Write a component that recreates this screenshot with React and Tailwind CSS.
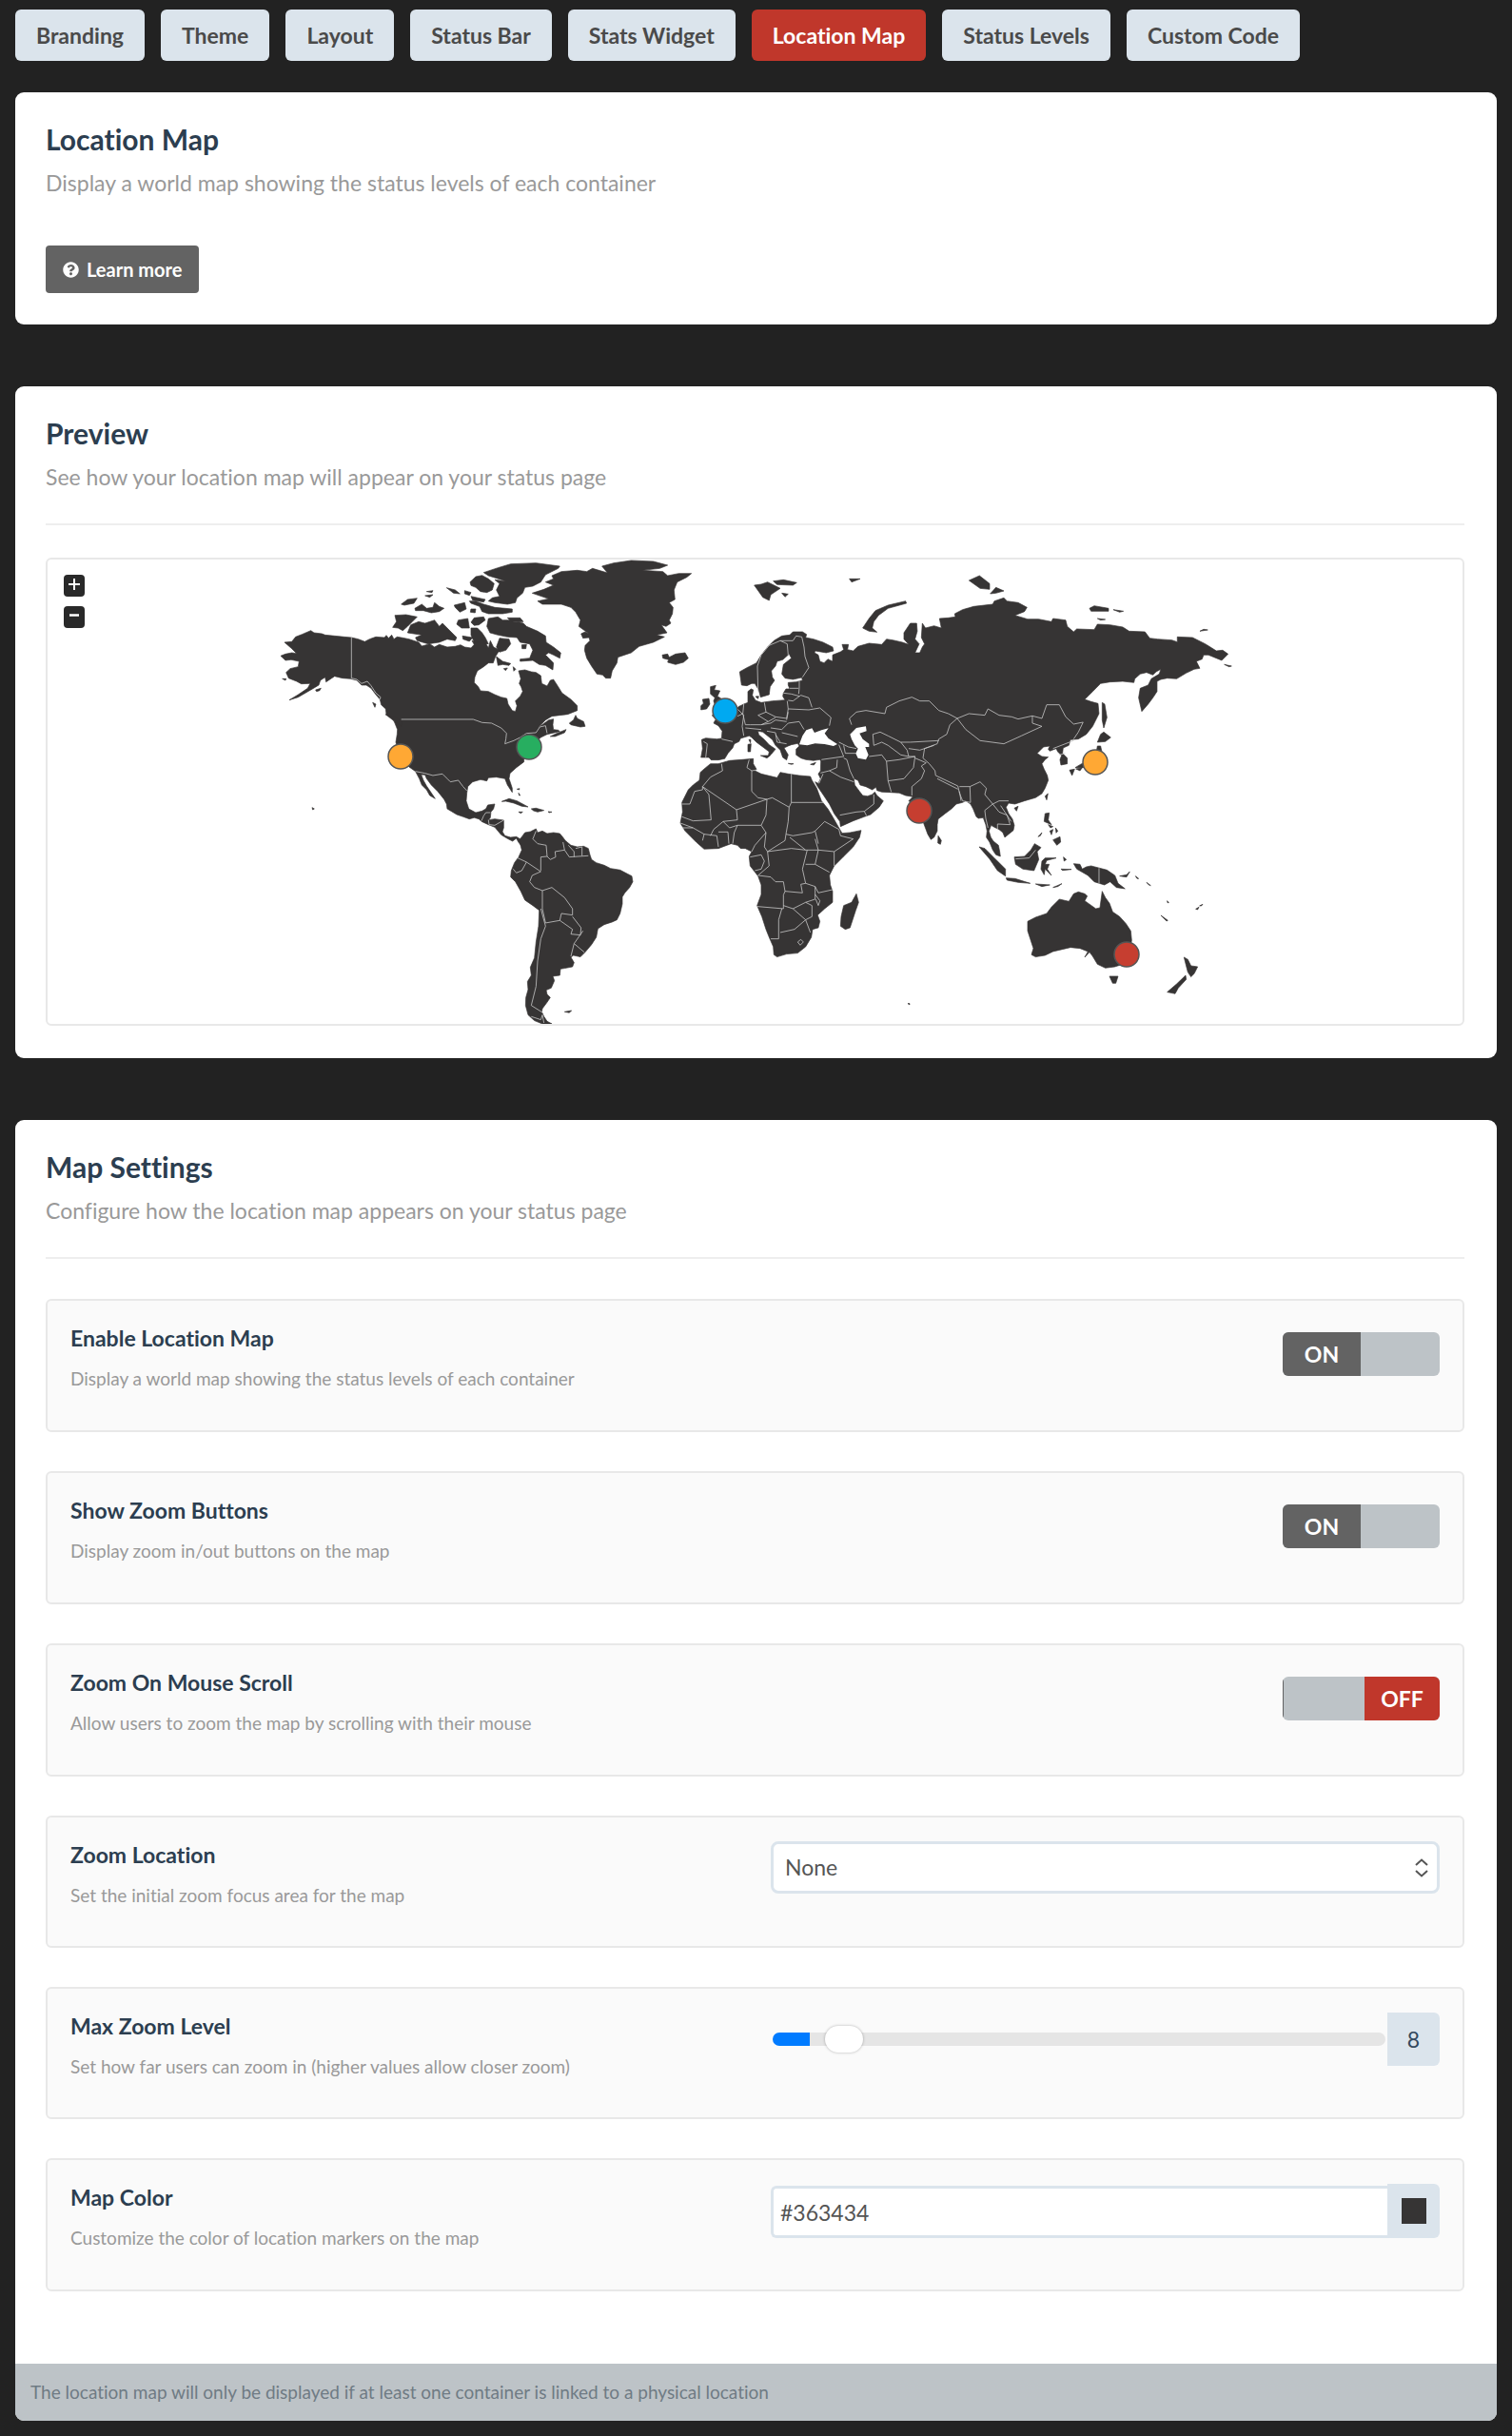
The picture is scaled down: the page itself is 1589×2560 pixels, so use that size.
import React, { useState } from 'react';
import { FaQuestionCircle } from 'react-icons/fa';

const TABS = [
  'Branding',
  'Theme',
  'Layout',
  'Status Bar',
  'Stats Widget',
  'Location Map',
  'Status Levels',
  'Custom Code',
];

// Map artwork, one entry per region. Each region has its own origin, drawn at 3x.
const REGIONS = [
  {
    name: 'north-america',
    transform: 'translate(280 580) scale(0.3333)',
    land: [
      // mainland
      'M57 285 80 283 92 268 112 260 140 248 150 255 175 258 185 262 215 265 245 268 268 270 290 275 310 283 325 275 345 268 372 270 378 263 385 272 395 262 402 275 412 268 425 270 450 275 480 285 490 297 515 290 530 300 545 292 570 300 595 298 612 293 625 300 645 303 655 292 648 280 658 285 672 285 680 275 690 285 700 303 706 280 716 300 735 310 722 330 715 350 700 350 685 362 665 375 657 395 655 412 668 425 675 438 700 440 720 450 740 458 758 462 762 480 775 500 785 503 790 485 785 470 800 455 808 440 803 425 797 415 802 400 795 375 815 372 835 378 850 380 865 390 868 415 885 423 895 405 905 402 920 425 932 445 960 465 980 485 980 500 950 512 900 518 880 530 855 555 890 530 905 527 903 545 905 560 920 562 925 566 885 575 865 585 850 600 830 620 812 655 812 662 788 680 768 698 765 715 775 745 775 758 760 735 752 715 725 710 700 712 695 722 675 718 650 725 635 740 632 760 630 785 638 810 660 822 680 817 692 810 698 798 720 795 716 810 708 820 706 838 700 845 720 842 748 846 748 870 744 882 752 895 770 900 788 898 800 905 808 918 805 928 795 916 788 903 776 912 760 904 740 892 730 880 720 868 700 860 678 850 670 842 655 838 640 842 620 835 600 828 570 810 568 795 560 780 540 755 520 735 505 715 500 703 488 702 495 720 505 738 520 760 532 778 515 768 505 750 490 735 482 715 470 692 450 678 420 645 408 600 412 575 413 560 405 540 398 525 378 512 376 495 362 482 358 465 345 450 330 430 315 420 300 420 285 405 265 400 240 398 215 392 206 398 188 410 185 395 170 405 165 420 145 432 100 458 72 467 100 450 130 430 138 415 110 416 95 408 70 398 62 380 75 368 100 362 103 345 78 340 60 342 45 328 60 322 80 318 95 320 80 305Z',
      // arctic islands
      'M685 65 730 50 770 38 850 35 925 45 920 52 880 72 865 95 840 108 815 112 808 130 790 145 785 160 760 165 720 160 700 155 712 145 735 140 725 120 735 100 720 88 755 92 700 75Z',
      'M642 95 660 78 680 74 700 85 718 100 712 120 695 128 675 125 660 112 645 106Z',
      'M640 155 660 155 685 165 720 175 775 180 775 190 745 195 700 195 680 188 672 172 645 162Z',
      'M568 113 595 120 610 132 590 130ZM625 122 645 128 640 137 625 132ZM645 140 690 150 685 158 650 152ZM505 125 525 122 522 128ZM500 138 525 135 515 143ZM425 165 445 150 475 146 465 162 435 168Z',
      'M468 178 490 165 505 178 525 175 530 160 545 172 560 178 545 188 520 192 495 185 470 185ZM592 168 625 160 630 180 610 190 595 175ZM645 180 660 180 658 192 643 190Z',
      'M405 200 440 198 475 205 460 220 445 235 430 248 415 240 398 238 410 220Z',
      'M455 230 480 220 500 225 530 215 545 235 555 225 570 240 585 255 600 270 595 280 570 275 545 285 510 290 475 280 470 270 490 262 445 255Z',
      'M605 215 635 210 640 240 615 240 600 228ZM655 208 685 205 690 215 670 230 655 232 645 222ZM618 265 650 270 640 282 620 275ZM645 240 665 240 680 255 690 270 700 290 655 285 645 262Z',
      'M700 210 730 205 745 215 775 215 810 225 820 235 855 250 880 265 882 285 905 300 928 318 925 335 905 325 890 318 880 325 905 350 903 372 880 358 860 355 840 342 800 345 800 338 830 335 840 310 830 290 800 285 790 270 760 268 730 262 705 255 695 235Z',
      'M735 272 765 275 770 290 755 310 735 316 725 300ZM725 330 745 345 770 352 765 358 745 355 730 358ZM805 293 820 292 818 305 806 305ZM760 208 800 208 810 220 775 222ZM748 368 760 366 754 374ZM778 362 786 370 780 376Z',
      // newfoundland, nova scotia, pacific coast islands
      'M975 515 980 525 1000 535 1005 550 990 552 960 545 955 540 968 530ZM895 582 915 572 945 560 940 570 910 582ZM375 512 405 520 425 535 425 550 405 535ZM50 400 62 400 60 405ZM155 435 172 430 168 437 158 440ZM335 475 345 480 342 490Z',
      // caribbean and hawaii
      'M742 787 765 778 790 785 825 804 805 802 780 792 755 786ZM835 810 850 808 875 815 855 820 842 816ZM795 820 808 820 802 824ZM888 819 900 820 892 822ZM790 748 798 746 797 750ZM795 760 800 768 797 768ZM144 806 151 810 146 813Z',
    ],
    borders:
      'M268 270V398L285 402 300 415 318 408 330 422 345 445 360 458 358 465M425 528H652L680 538 710 540 740 555 757 572 755 590 752 605 780 595 800 585 820 572 850 570 862 552 880 548 885 572M470 692 500 698 525 705 555 700 570 715 580 725 605 720 620 740 632 753M678 848 685 832 692 822 706 822M700 845 702 860 720 862 748 846',
  },
  {
    name: 'atlantic',
    transform: 'translate(520 580) scale(0.3333)',
    land: [
      // south america
      'M80 905 95 885 112 882 130 873 135 885 150 880 165 888 185 885 205 888 215 900 222 910 240 925 260 930 280 928 295 935 300 955 305 970 320 980 345 988 365 998 395 1003 418 1015 432 1022 435 1040 425 1058 410 1075 402 1088 402 1110 395 1140 385 1160 370 1167 345 1175 325 1188 320 1215 305 1238 285 1262 270 1277 248 1272 240 1278 250 1295 245 1308 220 1313 207 1315 205 1335 183 1338 188 1352 178 1375 162 1382 165 1395 175 1405 165 1420 150 1440 148 1450 155 1465 165 1480 180 1488 150 1488 125 1478 105 1460 97 1430 98 1405 105 1380 103 1355 115 1335 112 1310 125 1280 130 1230 138 1180 140 1130 120 1115 95 1098 82 1070 65 1040 50 1025 52 1005 62 980 75 962 85 940 80 920Z',
      // greenland
      'M118 130 155 118 185 105 160 95 185 85 180 75 210 62 260 58 290 62 308 52 355 66 338 45 375 35 430 27 500 30 545 42 520 52 465 58 530 62 545 75 580 68 620 68 605 80 575 95 565 120 568 150 550 160 562 175 560 195 550 215 555 225 540 235 525 230 543 255 510 262 535 268 500 285 455 298 430 318 388 332 385 350 370 375 365 398 350 398 340 388 322 385 305 360 290 335 283 310 285 295 300 280 297 270 278 272 272 258 285 252 297 258 265 235 270 215 255 190 240 175 210 165 150 165 135 155 170 148Z',
      'M528 325 545 322 550 332 570 322 600 318 610 335 595 348 570 355 545 348 548 340 530 335Z',
      'M680 425 697 421 692 435 710 438 702 455 718 465 740 480 762 505 755 535 700 530 685 516 700 500 690 470 694 460 680 448ZM655 465 675 462 678 480 668 495 650 498 650 485 658 478Z',
      'M220 1450 242 1446 235 1453Z',
    ],
    borders:
      'M130 880 120 905 135 920 162 925 165 960 175 970 192 962 190 945 220 940 215 915M220 940 235 962 295 958M232 925 250 945 250 962M255 935 275 930V958M165 960 145 962 145 1005M72 965 100 978 145 1008M100 978 85 1005 68 1012 58 1000M145 1008 118 1020 110 1040 125 1058 150 1068M150 1068 180 1058 220 1090 245 1125 245 1145 210 1140 205 1162 160 1170 150 1125 150 1068M145 1125 160 1180 145 1220 135 1290 130 1370 115 1430 150 1452M205 1162 245 1190 240 1205 270 1208 272 1185 245 1150M278 1195 250 1235 282 1262M250 1235 240 1275M115 1465 145 1475 150 1460 155 1485',
  },
  {
    name: 'eurasia-africa',
    transform: 'translate(700 580) scale(0.3333)',
    land: [
      // europe and asia
      'M232 378 255 365 285 350 300 325 320 300 340 280 365 265 390 262 400 252 430 252 443 260 440 270 465 275 495 285 525 300 528 312 505 318 470 312 468 318 480 325 485 345 498 350 510 338 525 345 525 325 550 315 560 308 555 292 575 292 572 308 590 312 605 298 640 288 680 292 695 275 715 278 745 285 765 292 750 275 750 255 770 225 790 225 792 250 785 275 798 290 785 318 800 318 808 300 815 290 805 270 808 225 818 240 845 233 868 240 862 210 890 208 912 205 910 195 935 182 970 172 1030 165 1035 155 1065 145 1075 155 1110 160 1138 175 1130 188 1100 200 1140 212 1175 212 1215 220 1220 210 1260 215 1265 235 1285 252 1295 243 1350 245 1360 228 1400 230 1440 237 1460 250 1510 252 1525 272 1550 275 1595 278 1612 284 1612 268 1660 270 1700 290 1735 312 1755 310 1772 322 1752 342 1735 335 1710 325 1695 325 1690 338 1672 345 1683 367 1665 370 1640 382 1610 400 1580 398 1560 402 1548 408 1548 440 1535 460 1520 480 1500 503 1490 460 1495 430 1520 420 1530 400 1555 385 1560 370 1545 378 1535 388 1515 380 1495 385 1478 400 1475 412 1440 408 1400 410 1370 415 1345 440 1320 465 1340 472 1362 478 1365 510 1345 550 1325 575 1300 590 1275 592 1270 610 1252 618 1250 635 1265 650 1265 668 1245 672 1242 655 1247 642 1235 630 1230 620 1210 628 1205 622 1210 612 1190 615 1170 635 1185 645 1205 647 1195 655 1185 668 1192 685 1202 705 1205 720 1195 745 1185 762 1165 775 1130 785 1100 795 1080 792 1072 805 1080 825 1092 842 1098 862 1095 878 1080 890 1068 900 1062 885 1050 875 1035 868 1025 862 1018 880 1024 900 1032 912 1048 925 1052 945 1054 960 1040 955 1030 940 1020 915 1010 900 1012 880 1008 860 1000 838 985 840 978 835 968 810 960 795 945 785 935 790 915 795 900 810 880 825 858 842 855 860 855 880 845 900 835 907 825 890 812 855 800 830 785 800 765 785 778 772 755 768 735 760 705 758 680 757 665 752 662 742 650 750 630 740 612 735 605 720 592 715 595 735 610 755 620 768 635 770 650 765 658 757 665 768 685 785 672 805 645 828 625 835 590 848 550 866 548 850 530 825 515 795 495 765 478 740 470 725 480 730 487 715 480 700 487 690 488 660 485 655 465 658 440 655 425 650 410 640 410 622 420 612 415 604 395 608 385 612 372 618 385 640 380 656 368 648 360 625 345 610 335 592 318 578 305 568 290 565 292 576 310 592 325 608 345 622 330 640 322 645 325 630 305 615 285 600 270 585 262 580 245 585 235 588 230 598 215 605 210 618 195 635 185 652 165 656 142 656 135 648 110 648 115 620 112 592 125 587 160 590 175 588 177 565 165 548 150 540 155 530 175 530 195 520 215 505 228 488 245 480 258 475 258 440 268 432 275 435 272 452 282 468 300 475 335 470 375 467 368 455 370 445 378 432 390 432 385 420 385 412 410 410 430 405 428 396 400 402 375 398 365 385 370 355 395 335 388 322 368 340 350 345 345 360 332 375 335 395 342 405 328 425 325 450 298 458 292 435 280 415 270 415 255 422 238 420Z',
      // africa
      'M140 668 165 668 200 658 240 655 275 652 275 668 285 685 280 690 300 700 350 712 360 695 385 700 420 705 455 708 460 720 475 745 490 785 510 810 525 835 545 870 555 887 580 885 615 878 610 900 590 930 560 960 530 990 515 1020 518 1050 525 1070 525 1105 500 1125 478 1145 485 1165 480 1185 462 1190 458 1215 440 1245 415 1265 380 1268 350 1277 340 1270 338 1245 325 1215 315 1190 302 1150 287 1115 300 1080 300 1050 290 1022 265 990 262 960 270 945 250 935 235 935 225 925 205 920 165 935 120 937 95 915 60 880 45 855 52 820 50 790 70 750 85 735 105 720 108 695 125 680Z',
      'M600 1078 607 1105 598 1130 580 1185 565 1190 550 1180 552 1150 560 1115 585 1105ZM858 895 868 910 865 922 857 918Z',
      // arctic ocean
      'M278 105 300 102 320 95 360 115 330 135 325 153 305 143ZM338 92 370 88 412 97 400 105 350 103ZM365 130 385 133 375 142Z',
      'M620 240 640 210 660 185 700 168 755 155 758 162 700 178 670 200 655 220 650 240 665 253 640 250ZM578 85 612 85 585 95Z',
      // mediterranean and baltic
      'M258 607 268 605 266 630 258 630ZM261 592 267 592 266 602ZM298 642 328 642 318 650ZM385 667 402 668 395 670ZM455 670 472 664 466 672ZM282 456 292 455 290 463ZM762 1424 768 1424 768 1428Z',
    ],
    water: [
      'M420 607 430 580 442 562 460 556 468 570 490 562 512 556 500 572 512 588 540 606 528 612 500 606 470 604 445 610Z',
      'M580 575 600 555 630 550 632 565 610 572 620 590 640 605 640 615 628 615 638 640 630 655 605 650 598 635 605 620 595 610 585 590Z',
    ],
    borders:
      // europe
      'M290 440 288 360 300 325 325 295 360 280 382 290 385 325M360 280 400 280 410 265 428 268 435 300 438 330 450 365 430 395M390 430 418 430M370 445 395 448 420 455M385 468 400 470 425 452 450 460 460 490M420 405V430L418 448M310 475 315 505 345 520 380 525 385 495 382 470M385 495 450 498M380 530 385 505M450 498 485 492 520 522 515 548M385 540 420 535 435 560M245 480 242 510 225 518M242 510 250 545 265 545 300 545 322 535 290 515 315 505M322 535 345 522M300 545 330 540 345 530 380 535M330 555 365 560 385 540M318 565 345 570 350 600 380 605M365 570 415 582M345 575 360 600M225 495 245 515 240 550 245 580M250 555 300 560M118 598 130 605 125 648M175 590 210 598' +
      // central asia
      'M585 545 578 525 600 505 630 500 690 510 695 490 735 470 775 458 800 470 830 470 860 500 890 510 918 525 895 545 885 575 860 590 855 605 815 620 810 650M860 595 770 600 740 600 700 580 675 568 652 575 655 610M655 610 680 600 700 610 740 640 765 645M765 620 800 625 845 610M740 600 760 625 765 645 785 645M640 645 680 640 695 660 735 655 785 645 780 680 750 715 700 722 695 660M700 722 710 757M785 650 820 665 805 675 815 690 805 715 775 740 775 768M810 650 830 668 848 690 850 705 920 738 925 760 935 785 960 790M855 715 920 748' +
      // china, mongolia and the south east
      'M918 525 955 510 1005 515 1015 495 1050 515 1090 520 1110 527 1155 517 1155 540 1185 550 1120 580 1065 605 990 595 945 560 918 525M1155 517 1185 525 1200 482 1240 482 1260 520 1285 543 1315 537 1300 568 1285 590M1220 620 1285 595M1240 640 1258 635M925 740 958 740 960 790M925 755 930 785M958 740 990 725 1010 745 1005 765 1030 795 1005 815 1008 840 1015 870M1030 795 1050 785 1080 785M1030 795 1050 820 1075 830 1085 860 1045 858 1045 875M1055 800 1088 850' +
      // middle east
      'M545 608 560 645 490 655M560 650 570 655 580 690 592 715M487 697 515 690 550 710 592 725M515 690 538 680 540 655M482 730 495 700M548 830 600 820 625 818 632 832M625 818 655 795 655 765M545 600 575 615 600 620M560 610 565 635 600 635' +
      // africa
      'M175 668 178 690 140 710 115 740M50 795 75 795 90 755 115 750V740L135 765 142 845 85 848 50 835M115 740 222 813 225 845 180 850 150 875 140 895M222 813 318 780M270 690 270 755 290 775 318 780M262 655 255 680 270 690 283 688M318 780 335 775 388 805 395 790M395 700V790H495M388 805 385 850 378 890M318 780 315 830 300 862 225 862M180 850 200 870 225 862 215 885 210 920M300 862 315 885 280 925 270 945M315 885 310 930 320 945 375 910 378 890M320 945 395 935 440 940M378 890 400 895 460 885 470 880 480 920M470 880 500 850 545 875 550 895 590 905 530 945 480 940 470 905M390 900 440 940 480 940 470 985 515 1010M530 945V990M320 945 325 990 290 1020 330 1025 345 1040 370 1040 375 1070 430 1075 425 1048 440 1045 430 1000 445 940M440 985H470M440 1045 470 1055 480 1075 525 1065M470 1080 485 1100 480 1115 472 1095M288 1118 370 1125 370 1082 375 1070M370 1115 400 1125 440 1105 470 1095 470 1055M365 1125 355 1160 355 1220 330 1220M360 1200 405 1190 440 1160M400 1125 440 1160 460 1150 460 1115 440 1105M440 1160 455 1200M415 1230 425 1222 433 1230 423 1240ZM265 962 300 955 310 975 300 1000 280 1005M50 870 85 870 120 890 115 910M120 890 160 895 165 930M165 883H195L198 920M45 855 85 870',
  },
  {
    name: 'pacific',
    transform: 'translate(980 580) scale(0.3333)',
    land: [
      // russian arctic
      'M115 90 148 75 180 100 180 118 150 115ZM182 132 200 112 225 123 200 130ZM495 178 510 170 555 178 555 187 500 187ZM570 182 602 187 590 190ZM520 210 545 213 530 215ZM843 250 855 244 868 246ZM920 355 943 360 935 362Z',
      // japan and sakhalin
      'M535 475 543 480 550 522 540 555 535 530ZM520 600 530 575 540 568 562 585 545 598ZM520 612 530 612 535 635 520 660 480 680 450 680 470 668 500 655 515 640ZM432 688 448 685 440 705ZM452 684 472 680 465 690Z',
      'M355 770 364 762 360 782ZM258 808 270 802 265 817Z',
      // philippines
      'M355 825 368 823 365 845 375 860 352 850ZM370 880 380 875 375 892ZM388 870 395 880 390 886ZM365 860 380 866 372 870ZM380 908 402 898 404 915 392 925ZM333 898 345 885 340 895Z',
      // indonesia
      'M147 930 165 935 195 965 215 985 230 1000 230 1022 205 1005 180 968ZM232 1028 260 1030 308 1045 270 1042 235 1035ZM258 962 290 960 310 940 322 920 342 932 330 945 335 970 320 1005 285 1000 262 985Z',
      'M345 975 355 965 390 965 360 973 355 985 368 985 362 1000 375 1020 355 1000 352 1018 342 1000ZM325 1047 370 1050 345 1055ZM380 1058 408 1046 395 1055ZM413 962 422 970 415 975ZM405 1000 438 1001 410 1004Z',
      'M445 983 465 985 472 1000 485 993 500 990 550 1003 575 1020 585 1045 607 1062 580 1058 560 1040 542 1050 510 1040 490 1020 455 1000ZM590 1022 612 1018 622 1008 612 1025ZM640 1022 650 1030 645 1030ZM675 1042 688 1052 682 1050Z',
      // australia and new zealand
      'M300 1165 325 1152 360 1140 375 1120 400 1095 430 1102 445 1078 460 1072 480 1078 488 1085 480 1100 515 1125 528 1122 535 1070 545 1090 558 1108 568 1135 590 1150 610 1172 625 1195 628 1225 620 1270 600 1300 575 1308 545 1312 520 1300 505 1275 495 1262 480 1278 490 1260 465 1250 435 1247 380 1260 355 1272 325 1277 312 1270 318 1250 300 1195Z',
      'M558 1338 585 1338 578 1360 568 1360ZM793 1278 805 1285 815 1305 836 1308 825 1330 815 1340 805 1325ZM798 1335 800 1348 775 1375 765 1393 740 1388 770 1362Z',
      'M720 1146 742 1162 738 1164ZM830 1126 840 1120 836 1128ZM842 1116 852 1111 848 1116ZM740 1100 745 1106 741 1106Z',
    ],
    borders: 'M262 968 305 965 325 940M525 997V1046',
  },
];

const MARKERS = [
  { x: 421, y: 795, color: '#ffa834' },
  { x: 556, y: 785, color: '#27ae60' },
  { x: 762, y: 747, color: '#00a9f1' },
  { x: 966, y: 852, color: '#c63e30' },
  { x: 1151, y: 801, color: '#ffa834' },
  { x: 1184, y: 1003, color: '#c63e30' },
];

function WorldMap({ color }) {
  return (
    <svg viewBox="50 588 1487 488" className="block w-full" role="img" aria-label="World map">
      {REGIONS.map((region) => (
        <g key={region.name} transform={region.transform}>
          <path d={region.land.join('')} fill={color} stroke={color} strokeWidth="2" strokeLinejoin="round" />
          {region.water && <path d={region.water.join('')} fill="#fff" />}
          <path d={region.borders} fill="none" stroke="#c8c8c8" strokeWidth="2.4" strokeLinejoin="round" />
        </g>
      ))}
      {MARKERS.map((m) => (
        <circle key={`${m.x}-${m.y}`} cx={m.x} cy={m.y} r="13" fill={m.color} stroke="#555" strokeWidth="1.5" />
      ))}
    </svg>
  );
}

function CardHeader({ title, text }) {
  return (
    <>
      <h2 className="text-[30px] leading-[36px] font-bold text-[#2c3e50]">{title}</h2>
      <p className="mt-[14px] text-[23px] leading-[28px] text-[#999]">{text}</p>
    </>
  );
}

function Setting({ id, title, text, className, children }) {
  return (
    <div className={`grid grid-cols-2 gap-x-[33px] rounded-md border-2 border-[#e8e8e8] bg-[#fafafa] px-6 ${className}`}>
      <div className="pt-[25px]">
        <label htmlFor={id} className="block text-[23px] leading-[28px] font-bold text-[#2c3e50]">{title}</label>
        <p className="mt-[17px] text-[19px] leading-6 text-[#999]">{text}</p>
      </div>
      {children}
    </div>
  );
}

function Toggle({ id, checked, onChange }) {
  return (
    <label className="mt-[33px] flex h-[46px] w-[165px] cursor-pointer justify-self-end overflow-hidden rounded-md bg-[#bdc3c7] text-[23px] font-bold text-white">
      <input id={id} type="checkbox" className="sr-only" checked={checked} onChange={() => onChange(!checked)} />
      {checked ? (
        <span className="flex w-[82px] items-center justify-center bg-[#636363]">ON</span>
      ) : (
        <span className="flex w-full justify-end border-l border-[#636363]">
          <span className="flex w-[79px] items-center justify-center bg-[#c0372b]">OFF</span>
        </span>
      )}
    </label>
  );
}

export default function App() {
  const [activeTab, setActiveTab] = useState('Location Map');
  const [enabled, setEnabled] = useState(true);
  const [zoomButtons, setZoomButtons] = useState(true);
  const [mouseScroll, setMouseScroll] = useState(false);
  const [zoomLocation, setZoomLocation] = useState('None');
  const [maxZoom, setMaxZoom] = useState(8);
  const [color, setColor] = useState('#363434');

  return (
    <div className="min-h-screen bg-[#222] px-4 pt-[10px] pb-4 font-['Lato',sans-serif] [font-variant-ligatures:none]">
      <nav className="flex flex-wrap gap-[17px]">
        {TABS.map((tab) => (
          <button
            key={tab}
            type="button"
            onClick={() => setActiveTab(tab)}
            className={`h-[54px] rounded-md px-[22px] text-[23px] font-bold ${
              tab === activeTab ? 'bg-[#c0372b] text-white' : 'bg-[#dbe4ec] text-[#4a4a4a]'
            }`}
          >
            {tab}
          </button>
        ))}
      </nav>

      <section className="mt-[33px] rounded-[9px] bg-white pt-[31px] pr-[34px] pb-[33px] pl-8">
        <CardHeader title="Location Map" text="Display a world map showing the status levels of each container" />
        <button type="button" className="mt-[52px] flex h-[50px] items-center gap-2 rounded bg-[#636363] px-[18px] text-[20px] font-bold text-white">
          <FaQuestionCircle size={17} />
          Learn more
        </button>
      </section>

      <section className="mt-[65px] rounded-[9px] bg-white pt-[31px] pr-[34px] pb-[34px] pl-8">
        <CardHeader title="Preview" text="See how your location map will appear on your status page" />
        <hr className="mt-[35px] border-t-2 border-[#eee]" />
        <div className="relative mt-[34px] rounded-md border-2 border-[#e8e8e8]">
          <WorldMap color={color} />
          {zoomButtons && (
            <div className="absolute top-4 left-[17px] flex flex-col gap-[10px]">
              <button type="button" aria-label="Zoom in" className="h-[23px] w-[22px] rounded bg-[#292929] text-white">
                <svg viewBox="0 0 22 23" className="block" stroke="currentColor" strokeWidth="2"><path d="M5 10h12M11 4v12" /></svg>
              </button>
              <button type="button" aria-label="Zoom out" className="h-[23px] w-[22px] rounded bg-[#292929] text-white">
                <svg viewBox="0 0 22 23" className="block" stroke="currentColor" strokeWidth="2.5"><path d="M6 9.5h10" /></svg>
              </button>
            </div>
          )}
        </div>
      </section>

      <section className="mt-[65px] overflow-hidden rounded-[9px] bg-white pt-[31px]">
        <div className="pr-[34px] pl-8">
          <CardHeader title="Map Settings" text="Configure how the location map appears on your status page" />
          <hr className="mt-[35px] border-t-2 border-[#eee]" />

          <div className="mt-[42px] flex flex-col gap-[41px]">
            <Setting id="enable-map" title="Enable Location Map" text="Display a world map showing the status levels of each container" className="pb-[42px]">
              <Toggle id="enable-map" checked={enabled} onChange={setEnabled} />
            </Setting>

            <Setting id="zoom-buttons" title="Show Zoom Buttons" text="Display zoom in/out buttons on the map" className="pb-[42px]">
              <Toggle id="zoom-buttons" checked={zoomButtons} onChange={setZoomButtons} />
            </Setting>

            <Setting id="mouse-scroll" title="Zoom On Mouse Scroll" text="Allow users to zoom the map by scrolling with their mouse" className="pb-[42px]">
              <Toggle id="mouse-scroll" checked={mouseScroll} onChange={setMouseScroll} />
            </Setting>

            <Setting id="zoom-location" title="Zoom Location" text="Set the initial zoom focus area for the map" className="pb-[41px]">
              <div className="relative mt-[25px] h-[55px]">
                <select
                  id="zoom-location"
                  value={zoomLocation}
                  onChange={(e) => setZoomLocation(e.target.value)}
                  className="h-full w-full appearance-none rounded-lg border-[3px] border-[#dbe4ec] bg-white px-3 text-[23px] text-[#555]"
                >
                  <option>None</option>
                  <option>Europe</option>
                  <option>North America</option>
                  <option>Asia</option>
                </select>
                <svg viewBox="0 0 14 20" className="pointer-events-none absolute top-[18px] right-3 h-5 w-[14px]" fill="none" stroke="#555" strokeWidth="2">
                  <path d="M1 7l6-5.5L13 7M1 13l6 5.5 6-5.5" />
                </svg>
              </div>
            </Setting>

            <Setting id="max-zoom" title="Max Zoom Level" text="Set how far users can zoom in (higher values allow closer zoom)" className="pb-[41px]">
              <div className="mt-[25px] flex h-[56px] items-center gap-[2px] pl-[2px]">
                <input
                  id="max-zoom"
                  type="range"
                  min="1"
                  max="78"
                  value={maxZoom}
                  onChange={(e) => setMaxZoom(Number(e.target.value))}
                  className="h-[14px] min-w-0 flex-1 appearance-none rounded-full bg-[linear-gradient(to_right,#007bff_6%,#e5e5e5_6%)] [&::-webkit-slider-thumb]:h-7 [&::-webkit-slider-thumb]:w-10 [&::-webkit-slider-thumb]:appearance-none [&::-webkit-slider-thumb]:rounded-[14px] [&::-webkit-slider-thumb]:bg-white [&::-webkit-slider-thumb]:shadow-[0_0_3px_rgba(0,0,0,0.3)]"
                />
                <output htmlFor="max-zoom" className="flex h-full w-[55px] items-center justify-center rounded-r-md bg-[#dbe4ec] text-[23px] text-[#34495e]">
                  {maxZoom}
                </output>
              </div>
            </Setting>

            <Setting id="map-color" title="Map Color" text="Customize the color of location markers on the map" className="pb-[42px]">
              <div className="mt-[25px] flex h-[57px] items-end">
                <input
                  id="map-color"
                  type="text"
                  value={color}
                  onChange={(e) => setColor(e.target.value)}
                  className="h-[55px] min-w-0 flex-1 rounded-l-md border-[3px] border-r-0 border-[#dbe4ec] bg-white px-[7px] text-[23px] text-[#555]"
                />
                <span className="flex h-full w-[55px] items-center justify-center rounded-r-md bg-[#dbe4ec]">
                  <input
                    type="color"
                    aria-label="Pick map color"
                    value={color}
                    onChange={(e) => setColor(e.target.value)}
                    className="h-[27px] w-[26px] appearance-none [&::-webkit-color-swatch]:border-0 [&::-webkit-color-swatch-wrapper]:p-0"
                  />
                </span>
              </div>
            </Setting>
          </div>
        </div>

        <footer className="mt-[76px] flex h-[60px] items-center bg-[#bdc3c7] px-4 text-[19px] text-[#6f7b84]">
          The location map will only be displayed if at least one container is linked to a physical location
        </footer>
      </section>
    </div>
  );
}
